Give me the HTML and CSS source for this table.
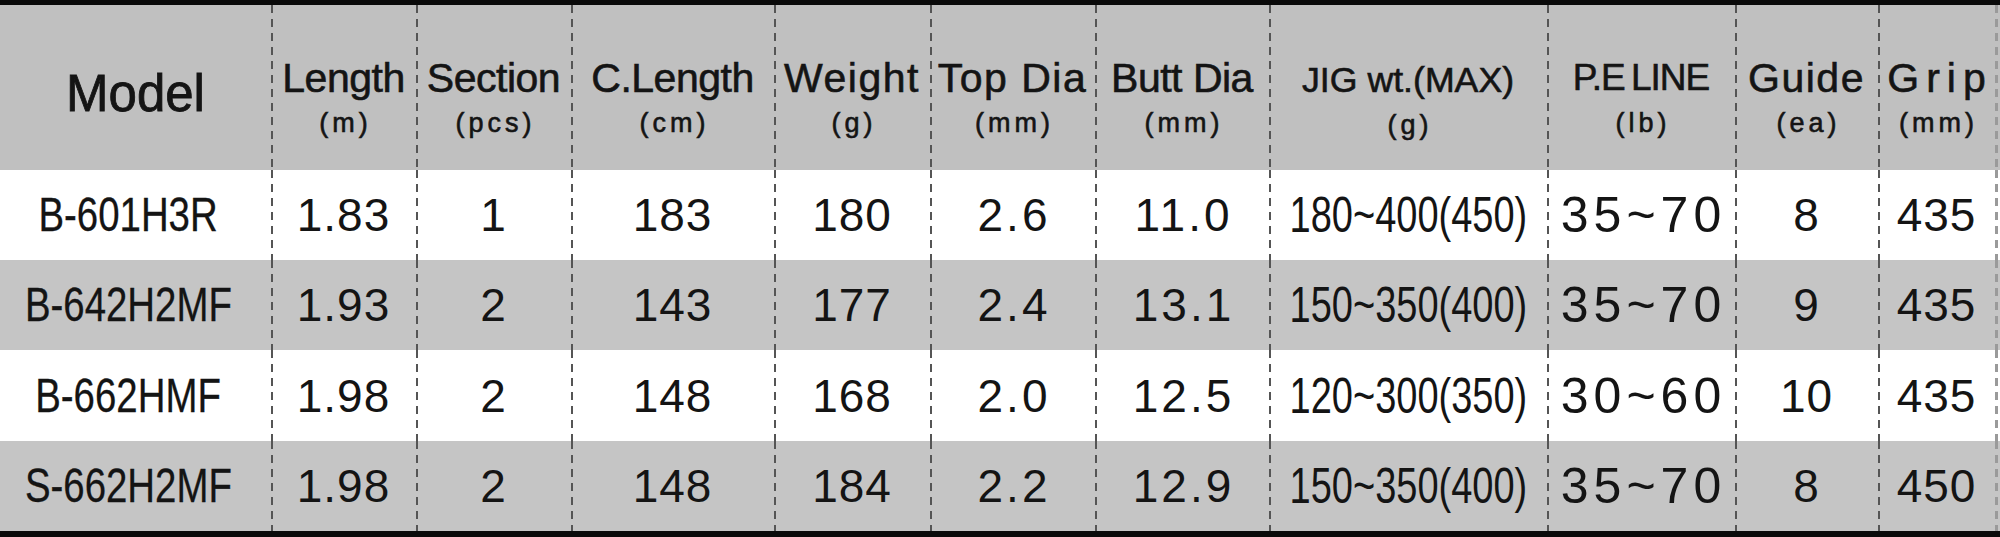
FILE: index.html
```html
<!DOCTYPE html>
<html lang="en">
<head>
<meta charset="utf-8">
<title>Rod Specifications</title>
<link rel="stylesheet" href="styles.css">
</head>
<body>
<div class="spec">
  <div class="row head">
    <div class="cell model-h"><span>Model</span></div>
    <div class="cell"><span class="t">Length</span><span class="u">(m)</span></div>
    <div class="cell"><span class="t">Section</span><span class="u">(pcs)</span></div>
    <div class="cell"><span class="t">C.Length</span><span class="u">(cm)</span></div>
    <div class="cell"><span class="t t-weight">Weight</span><span class="u">(g)</span></div>
    <div class="cell"><span class="t t-top">Top Dia</span><span class="u">(mm)</span></div>
    <div class="cell"><span class="t">Butt Dia</span><span class="u">(mm)</span></div>
    <div class="cell"><span class="t t-jig">JIG wt.(MAX)</span><span class="u">(g)</span></div>
    <div class="cell"><span class="t t-pe">P.E LINE</span><span class="u">(lb)</span></div>
    <div class="cell"><span class="t t-guide">Guide</span><span class="u">(ea)</span></div>
    <div class="cell"><span class="t t-grip">Grip</span><span class="u">(mm)</span></div>
    <div class="cell edge"></div>
  </div>

  <div class="row light">
    <div class="cell model"><span class="cond">B-601H3R</span></div>
    <div class="cell num">1.83</div>
    <div class="cell num">1</div>
    <div class="cell num">183</div>
    <div class="cell num">180</div>
    <div class="cell num dia">2.6</div>
    <div class="cell num dia">11.0</div>
    <div class="cell jig"><span class="cond-j">180~400(450)</span></div>
    <div class="cell pe">35~70</div>
    <div class="cell num">8</div>
    <div class="cell num">435</div>
    <div class="cell edge"></div>
  </div>

  <div class="row dark">
    <div class="cell model"><span class="cond">B-642H2MF</span></div>
    <div class="cell num">1.93</div>
    <div class="cell num">2</div>
    <div class="cell num">143</div>
    <div class="cell num">177</div>
    <div class="cell num dia">2.4</div>
    <div class="cell num dia">13.1</div>
    <div class="cell jig"><span class="cond-j">150~350(400)</span></div>
    <div class="cell pe">35~70</div>
    <div class="cell num">9</div>
    <div class="cell num">435</div>
    <div class="cell edge"></div>
  </div>

  <div class="row light r3">
    <div class="cell model"><span class="cond">B-662HMF</span></div>
    <div class="cell num">1.98</div>
    <div class="cell num">2</div>
    <div class="cell num">148</div>
    <div class="cell num">168</div>
    <div class="cell num dia">2.0</div>
    <div class="cell num dia">12.5</div>
    <div class="cell jig"><span class="cond-j">120~300(350)</span></div>
    <div class="cell pe">30~60</div>
    <div class="cell num">10</div>
    <div class="cell num">435</div>
    <div class="cell edge"></div>
  </div>

  <div class="row dark">
    <div class="cell model"><span class="cond">S-662H2MF</span></div>
    <div class="cell num">1.98</div>
    <div class="cell num">2</div>
    <div class="cell num">148</div>
    <div class="cell num">184</div>
    <div class="cell num dia">2.2</div>
    <div class="cell num dia">12.9</div>
    <div class="cell jig"><span class="cond-j">150~350(400)</span></div>
    <div class="cell pe">35~70</div>
    <div class="cell num">8</div>
    <div class="cell num">450</div>
    <div class="cell edge"></div>
  </div>
</div>
</body>
</html>
```

FILE: styles.css
```css
html, body {
  margin: 0;
  padding: 0;
  background: #000;
}

.spec {
  width: 2000px;
  height: 537px;
  box-sizing: border-box;
  border-top: 5px solid #0a0a0a;
  border-bottom: 6px solid #0a0a0a;
  background: #fff;
  font-family: "Liberation Sans", Arial, sans-serif;
  color: #141414;
  overflow: hidden;
}

.row {
  display: grid;
  grid-template-columns: 271px 145px 155px 203px 156px 165px 174px 278px 188px 143px 117px 5px;
  height: 90px;
}

.row.head {
  height: 165px;
  background: #c0c0c0;
}

.row.light { background: #ffffff; }
.row.dark { background: #c5c5c5; }
.row.r3 { height: 91px; }

.cell {
  display: flex;
  align-items: center;
  justify-content: center;
  white-space: nowrap;
  background-image: repeating-linear-gradient(to bottom, #555 0 8px, transparent 8px 14px);
  background-size: 2px 100%;
  background-repeat: no-repeat;
  background-position: 0 0;
}

.cell:first-child {
  background-image: none;
}

.cell.edge {
  background-image: repeating-linear-gradient(to bottom, #9a9a9a 0 8px, transparent 8px 14px);
  background-size: 3px 100%;
}

/* header */
.head .cell {
  flex-direction: column;
  justify-content: flex-start;
  padding-top: 50px;
  box-sizing: border-box;
  -webkit-text-stroke: 0.6px #141414;
}

.head .cell.model-h {
  justify-content: center;
  padding-top: 12px;
  font-size: 51px;
  line-height: 60px;
  -webkit-text-stroke: 0.8px #141414;
}

.head .cell.edge { padding-top: 0; }

.t {
  font-size: 41px;
  line-height: 46px;
  letter-spacing: -0.5px;
}

.t-weight { letter-spacing: 1.5px; }
.t-top { letter-spacing: 1.5px; }
.t-jig {
  font-size: 35px;
  letter-spacing: 0;
  padding-top: 2px;
  display: inline-block;
  transform: scaleX(1.02);
}
.t-pe {
  font-size: 37px;
  letter-spacing: -1px;
  word-spacing: -3px;
}
.t-guide { letter-spacing: 1.5px; }
.t-grip { letter-spacing: 7px; padding-left: 7px; }

.u {
  font-size: 27px;
  line-height: 34px;
  margin-top: 5px;
  letter-spacing: 4px;
  padding-left: 4px;
}

/* data */
.model {
  padding-right: 14px;
  font-size: 48px;
  line-height: 1;
  -webkit-text-stroke: 0.3px #141414;
}

.cond {
  display: inline-block;
  transform: scaleX(0.8);
}

.num {
  font-size: 46px;
  line-height: 1;
  letter-spacing: 1px;
}

.num.dia {
  letter-spacing: 3px;
  padding-left: 3px;
}

.jig {
  font-size: 50px;
  line-height: 1;
}

.cond-j {
  display: inline-block;
  transform: scaleX(0.76);
}

.pe {
  font-size: 50px;
  line-height: 1;
  letter-spacing: 5px;
  padding-left: 5px;
}
```
